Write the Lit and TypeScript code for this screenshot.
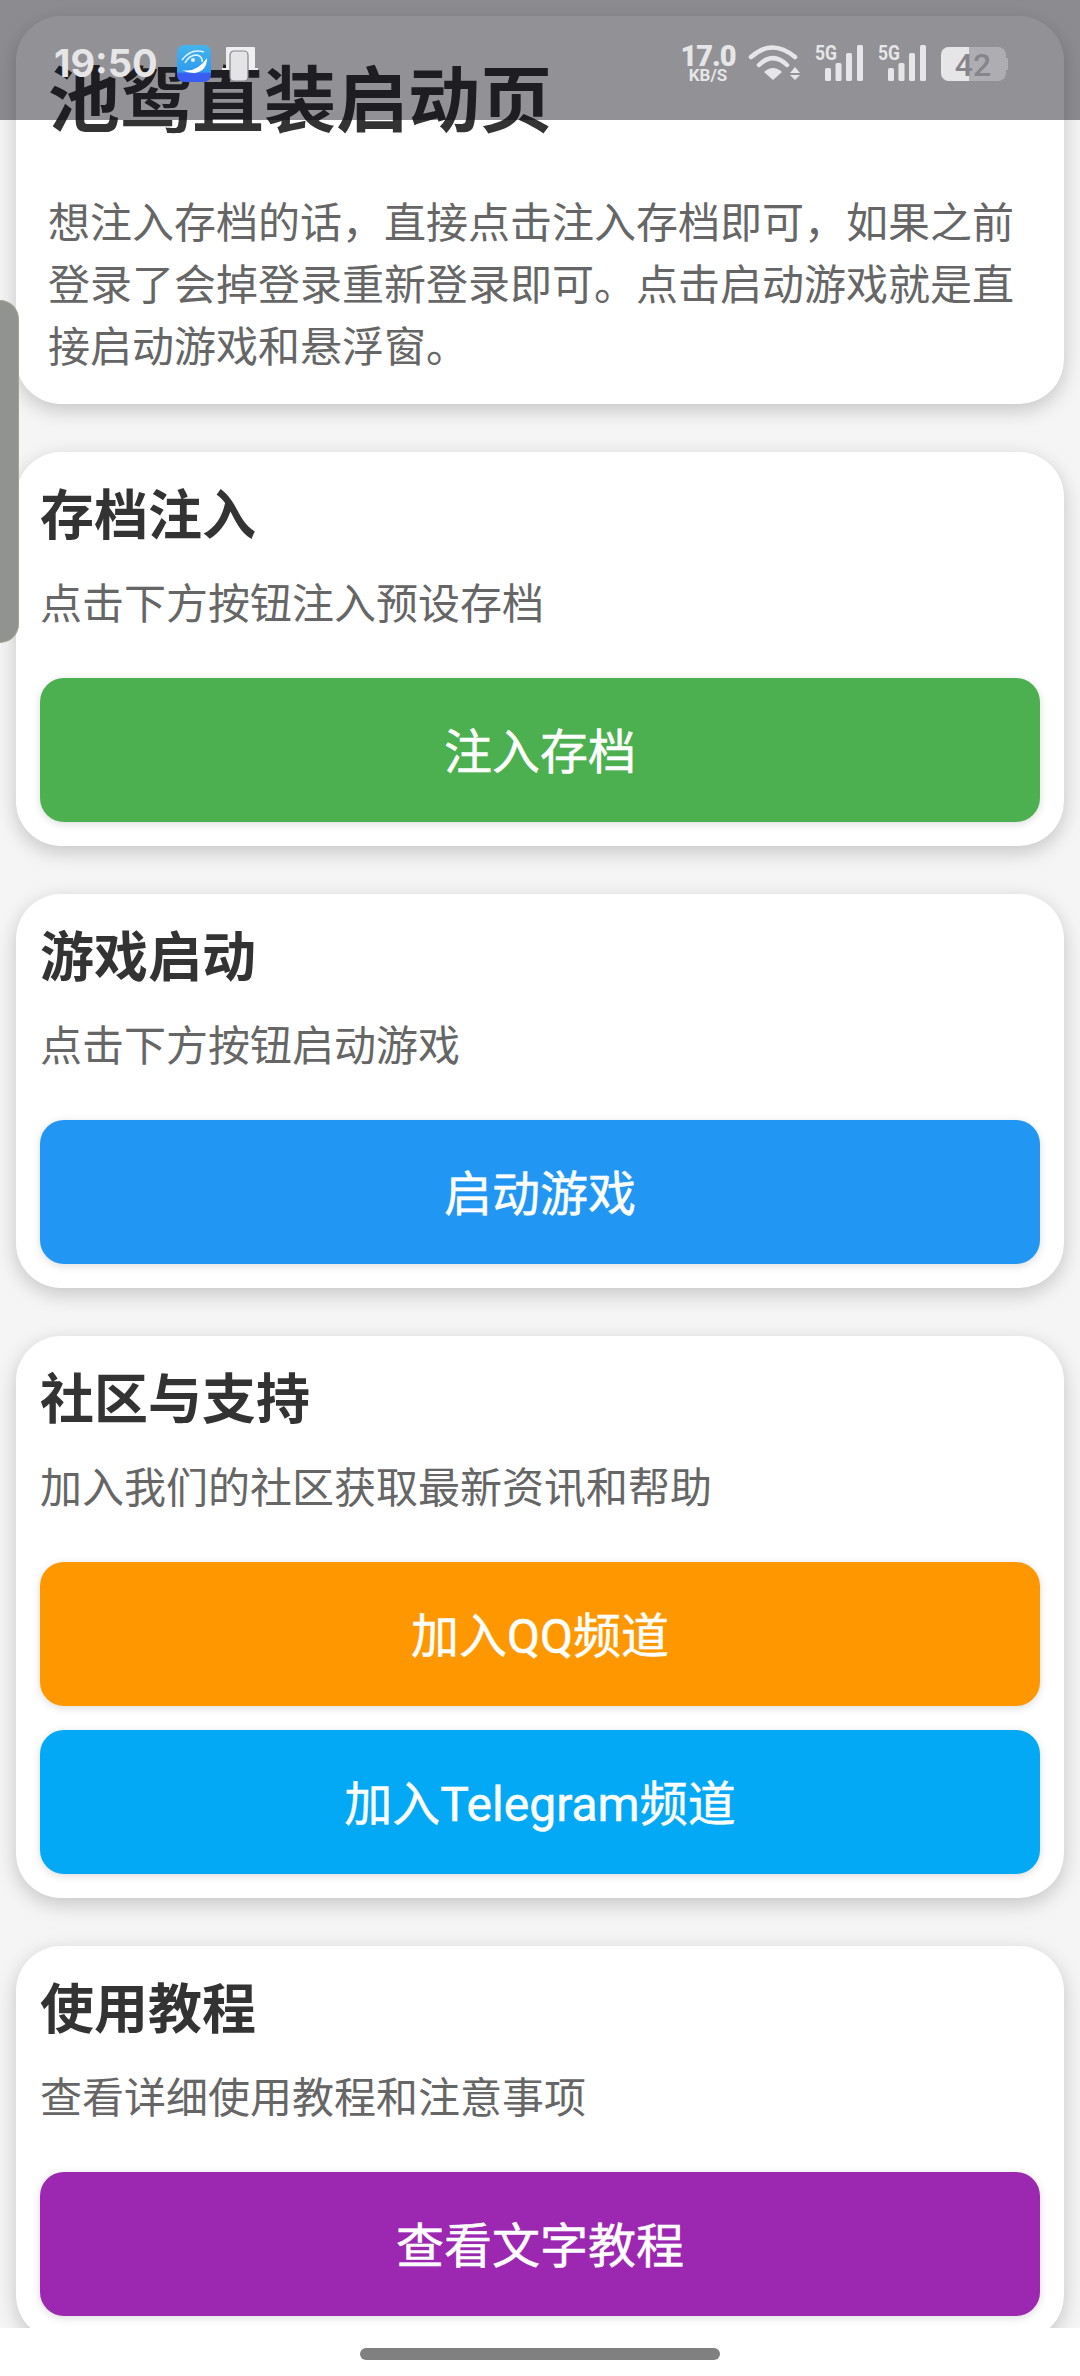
import { LitElement, html, css, svg } from 'lit';
import { customElement } from 'lit/decorators.js';

interface Section {
  title: string;
  desc: string;
  buttons: { label: string; color: string }[];
}

const SECTIONS: Section[] = [
  { title: '存档注入', desc: '点击下方按钮注入预设存档', buttons: [{ label: '注入存档', color: '#4caf50' }] },
  { title: '游戏启动', desc: '点击下方按钮启动游戏', buttons: [{ label: '启动游戏', color: '#2196f3' }] },
  {
    title: '社区与支持',
    desc: '加入我们的社区获取最新资讯和帮助',
    buttons: [
      { label: '加入QQ频道', color: '#ff9800' },
      { label: '加入Telegram频道', color: '#03a9f4' },
    ],
  },
  { title: '使用教程', desc: '查看详细使用教程和注意事项', buttons: [{ label: '查看文字教程', color: '#9c27b0' }] },
];

const signal = svg`
  <text x="0" y="15" font-size="21" font-weight="700" fill="#e6e6e8" font-family="Roboto, sans-serif" textLength="22" lengthAdjust="spacingAndGlyphs">5G</text>
  <rect x="10" y="23" width="6" height="13" rx="1.5" fill="#e6e6e8" />
  <rect x="20.5" y="18" width="6" height="18" rx="1.5" fill="#e6e6e8" />
  <rect x="31" y="8" width="6" height="28" rx="1.5" fill="#e6e6e8" />
  <rect x="42" y="0" width="6" height="36" rx="1.5" fill="#e6e6e8" />
`;

@customElement('app-root')
export class AppRoot extends LitElement {
  static styles = css`
    :host {
      display: block;
      position: relative;
      width: 1080px;
      height: 2376px;
      overflow: hidden;
      background: #fff;
      font-family: 'Roboto', 'Noto Sans CJK SC', sans-serif;
    }
    .page {
      height: 2328px;
      overflow: hidden;
      box-sizing: border-box;
      background: #f5f5f5;
      padding: 16px;
      display: flex;
      flex-direction: column;
      gap: 48px;
    }
    .card {
      flex: none;
      background: #fff;
      border-radius: 45px;
      padding: 24px;
      box-shadow: 0 6px 20px rgba(0, 0, 0, 0.2);
      display: flex;
      flex-direction: column;
    }
    .intro {
      height: 388px;
      box-sizing: border-box;
      padding: 43px 32px 0;
    }
    h1 {
      margin: 0;
      font-size: 72px;
      line-height: 86px;
      font-weight: 700;
      color: #333;
    }
    .intro p {
      margin: 48px 0 0;
      font-size: 42px;
      line-height: 62px;
      color: #666;
    }
    h2 {
      margin: 3px 0 0;
      font-size: 54px;
      line-height: 76px;
      font-weight: 700;
      color: #333;
    }
    .desc {
      margin: 18px 0 41px;
      font-size: 42px;
      line-height: 64px;
      color: #666;
    }
    .btn {
      height: 144px;
      box-sizing: border-box;
      padding-bottom: 4px;
      border-radius: 24px;
      display: flex;
      align-items: center;
      justify-content: center;
      color: #fff;
      font-size: 48px;
      -webkit-text-stroke: 0.5px #fff;
      box-shadow: 0 2px 8px rgba(0, 0, 0, 0.14);
    }
    .btn + .btn {
      margin-top: 24px;
    }
    .nav {
      height: 48px;
      display: flex;
      align-items: center;
      justify-content: center;
    }
    .pill {
      width: 360px;
      height: 12px;
      margin-top: 3px;
      border-radius: 6px;
      background: #808080;
    }
    /* system overlays from the screenshot */
    .status {
      position: absolute;
      left: 0;
      top: 0;
      width: 1080px;
      height: 120px;
      box-sizing: border-box;
      padding: 45px 72px 0 54px;
      background: rgba(2, 0, 10, 0.43);
      display: flex;
      align-items: flex-start;
      color: #e6e6e8;
    }
    .status svg {
      overflow: visible;
    }
    .time {
      font-size: 38px;
      line-height: 36px;
      font-weight: 700;
      width: 123px;
      font-family: 'Inter', sans-serif;
    }
    .icons {
      display: flex;
      gap: 11px;
    }
    .right {
      margin-left: auto;
      display: flex;
      align-items: flex-start;
      gap: 15px;
    }
    .speed {
      width: 52px;
      display: flex;
      flex-direction: column;
      align-items: center;
      font-family: 'Roboto', sans-serif;
      font-weight: 700;
    }
    .speed b {
      font-size: 29px;
      line-height: 23px;
      letter-spacing: -1px;
    }
    .speed span {
      font-size: 17px;
      line-height: 14px;
    }
    .side {
      position: absolute;
      left: 0;
      top: 300px;
      width: 19px;
      height: 343px;
      box-sizing: border-box;
      background: #909390;
      border-radius: 0 20px 20px 0;
      border: 1px solid #a0a58f;
      border-left: none;
    }
  `;

  render() {
    return html`
      <div class="page">
        <div class="card intro">
          <h1>池鸳直装启动页</h1>
          <p>想注入存档的话，直接点击注入存档即可，如果之前登录了会掉登录重新登录即可。点击启动游戏就是直接启动游戏和悬浮窗。</p>
        </div>
        ${SECTIONS.map(
          (s) => html`
            <div class="card">
              <h2>${s.title}</h2>
              <div class="desc">${s.desc}</div>
              ${s.buttons.map((b) => html`<div class="btn" style="background:${b.color}">${b.label}</div>`)}
            </div>
          `
        )}
      </div>
      <div class="nav"><div class="pill"></div></div>
      <div class="side"></div>
      <div class="status">
        <div class="time">19:50</div>
        <div class="icons">
          <svg width="34" height="37" viewBox="0 0 34 37">
            <defs>
              <linearGradient id="app" x1="0" y1="0" x2="0" y2="1">
                <stop offset="0" stop-color="#45b4ea" />
                <stop offset="0.72" stop-color="#2f9bf0" />
                <stop offset="0.78" stop-color="#3a5cf0" />
              </linearGradient>
            </defs>
            <rect width="34" height="37" rx="7" fill="url(#app)" />
            <path d="M5 15 Q14 3 27 7" fill="none" stroke="#dff2ff" stroke-width="1.6" />
            <path d="M8 18 Q12 10 20 10 Q26 12 25 17" fill="none" stroke="#dff2ff" stroke-width="1.6" />
            <circle cx="16" cy="15" r="2" fill="#dff2ff" />
            <path d="M5 25 Q20 28 30 13 Q30 26 18 28 Q10 28 5 25 Z" fill="#fff" />
          </svg>
          <svg width="36" height="37" viewBox="0 0 36 37">
            <rect x="4" y="2" width="29" height="22" rx="1" fill="#efeff1" />
            <rect x="0" y="23" width="36" height="2" fill="#efeff1" />
            <rect x="8" y="6" width="18" height="30" rx="4" fill="#e4e4e6" stroke="#86858b" stroke-width="1.2" />
          </svg>
        </div>
        <div class="right">
          <div class="speed"><b>17.0</b><span>KB/S</span></div>
          <svg width="51" height="36" viewBox="0 0 51 36">
            <path d="M2 12 Q23 -7 46 12" fill="none" stroke="#e6e6e8" stroke-width="4.5" stroke-linecap="round" />
            <path d="M10 20 Q24 6 38 20" fill="none" stroke="#e6e6e8" stroke-width="4.5" stroke-linecap="round" />
            <path d="M15 27 Q24 19 33 27 L24 35 Z" fill="#e6e6e8" />
            <path d="M46 22 L51 28 H41 Z M41 30 H51 L46 35 Z" fill="#e6e6e8" />
          </svg>
          <svg width="48" height="36" viewBox="0 0 48 36">${signal}</svg>
          <svg width="48" height="36" viewBox="0 0 48 36">${signal}</svg>
          <svg width="67" height="36" viewBox="0 0 67 36">
            <rect x="0" y="2" width="65" height="34" rx="8" fill="#aeadb2" />
            <path d="M8 2 H28 V36 H8 A8 8 0 0 1 0 28 V10 A8 8 0 0 1 8 2 Z" fill="#e6e6e8" />
            <rect x="65" y="13" width="2" height="12" fill="#aeadb2" />
            <text x="32" y="31" text-anchor="middle" font-size="32" font-weight="500" fill="#86858b" font-family="Roboto, sans-serif">42</text>
          </svg>
        </div>
      </div>
    `;
  }
}
